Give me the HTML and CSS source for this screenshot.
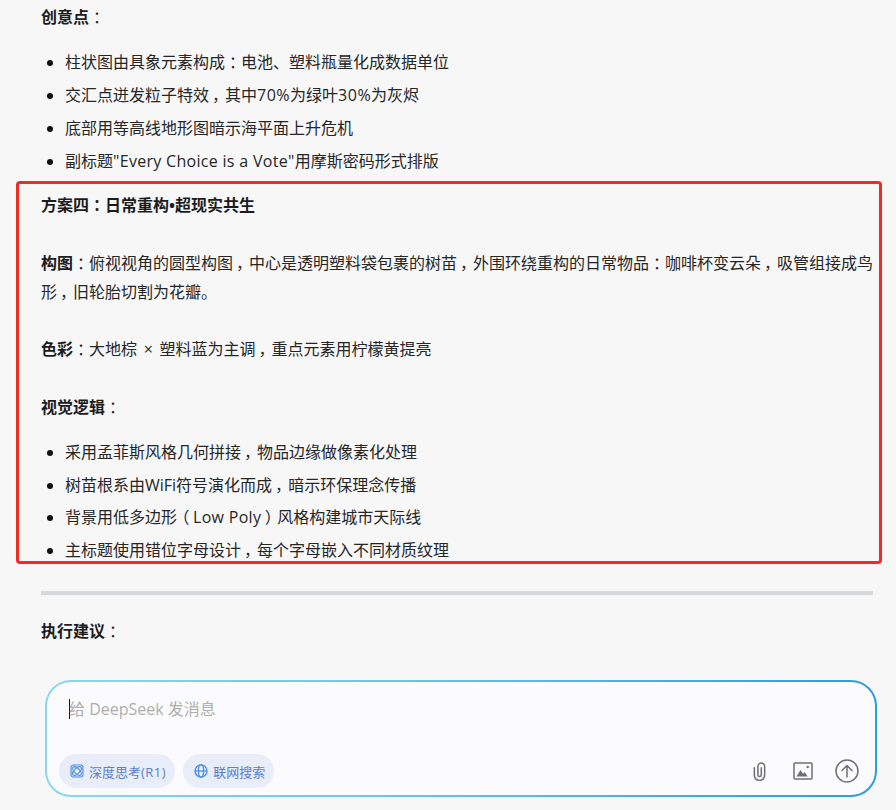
FILE: index.html
```html
<!DOCTYPE html>
<html lang="zh-CN">
<head>
<meta charset="utf-8">
<title>DeepSeek</title>
<link rel="stylesheet" href="styles.css">
</head>
<body>
<div class="page">
  <main class="chat">
    <p><strong>创意点</strong><span class="pun">：</span></p>
    <ul>
      <li>柱状图由具象元素构成<span class="pun">：</span>电池、塑料瓶量化成数据单位</li>
      <li>交汇点迸发粒子特效<span class="pun">，</span>其中<span class="lat-wide">70%</span>为绿叶<span class="lat-wide">30%</span>为灰烬</li>
      <li>底部用等高线地形图暗示海平面上升危机</li>
      <li>副标题<span class="lat">"Every Choice is a Vote"</span>用摩斯密码形式排版</li>
    </ul>
    <p><strong>方案四<span class="pun">：</span>日常重构•超现实共生</strong></p>
    <p><strong>构图</strong><span class="pun">：</span>俯视视角的圆型构图<span class="pun">，</span>中心是透明塑料袋包裹的树苗<span class="pun">，</span>外围环绕重构的日常物品<span class="pun">：</span>咖啡杯变云朵<span class="pun">，</span>吸管组接成鸟形<span class="pun">，</span>旧轮胎切割为花瓣。</p>
    <p><strong>色彩</strong><span class="pun">：</span>大地棕 <span class="times">×</span> 塑料蓝为主调<span class="pun">，</span>重点元素用柠檬黄提亮</p>
    <p><strong>视觉逻辑</strong><span class="pun">：</span></p>
    <ul>
      <li>采用孟菲斯风格几何拼接<span class="pun">，</span>物品边缘做像素化处理</li>
      <li>树苗根系由WiFi符号演化而成<span class="pun">，</span>暗示环保理念传播</li>
      <li>背景用低多边形<span class="pun">（</span><span class="lat">Low Poly</span><span class="pun">）</span>风格构建城市天际线</li>
      <li>主标题使用错位字母设计<span class="pun">，</span>每个字母嵌入不同材质纹理</li>
    </ul>
    <hr class="rule">
    <p><strong>执行建议</strong><span class="pun">：</span></p>
  </main>
  <div class="highlight"></div>
  <section class="composer">
    <div class="prompt"><span class="caret"></span><span>给 DeepSeek 发消息</span></div>
    <div class="toolbar">
      <button class="chip">
        <svg class="chip-icon" viewBox="0 0 16 16" fill="none" stroke="currentColor" stroke-width="1.3"><rect x="1.2" y="1.2" width="13.6" height="13.6" rx="2.5"/><ellipse cx="8" cy="8" rx="6.4" ry="3" transform="rotate(45 8 8)"/><ellipse cx="8" cy="8" rx="6.4" ry="3" transform="rotate(-45 8 8)"/></svg>
        <span>深度思考<span class="lat-wide">(R1)</span></span>
      </button>
      <button class="chip">
        <svg class="chip-icon" viewBox="0 0 16 16" fill="none" stroke="currentColor" stroke-width="1.5"><circle cx="8" cy="8" r="6.9"/><ellipse cx="8" cy="8" rx="3" ry="6.9"/><path d="M1.1 8h13.8"/></svg>
        <span>联网搜索</span>
      </button>
      <div class="actions">
        <svg class="clip" viewBox="0 0 16 20" fill="none" stroke="currentColor" stroke-width="1.6" stroke-linecap="round"><path d="M2.5 6v8a5.5 5.5 0 0 0 11 0V4.6a3.6 3.6 0 0 0-7.2 0v9a1.8 1.8 0 0 0 3.6 0V6"/></svg>
        <svg class="pic" viewBox="0 0 20 18" fill="none"><rect x="1" y="1" width="18" height="16" rx="1" stroke="currentColor" stroke-width="1.5"/><path d="M3.5 14.5l4-6.5 2.6 3.8 1.6-1.8 3 4.5z" fill="currentColor"/><circle cx="14.7" cy="5" r="1.2" fill="currentColor"/></svg>
        <svg class="send" viewBox="0 0 24 24" fill="none" stroke="currentColor" stroke-width="1.5" stroke-linecap="round" stroke-linejoin="round"><circle cx="12" cy="12" r="11"/><path d="M12 18V6.8M7 11.5l5-5 5 5"/></svg>
      </div>
    </div>
  </section>
</div>
</body>
</html>
```
FILE: styles.css
```css
* { box-sizing: border-box; }
html, body { margin: 0; height: 100%; }
body {
  background: #f7f7f8;
  color: #262626;
  font-family: "Open Sans", "Noto Sans CJK SC", sans-serif;
  font-size: 16px;
  overflow: hidden;
}
.page { position: relative; width: 896px; height: 810px; overflow: hidden; }
.chat { padding: 3.4px 18px 0 41px; }
p { margin: 0 0 28.8px; line-height: 28.8px; }
strong { font-weight: 700; color: #1c1c1c; }
ul { margin: 16px 0; padding: 0 0 0 24px; }
li { line-height: 28.8px; margin-bottom: 4px; }
li::marker { color: #111; }
.chat > p + ul { margin-top: -12.8px; }
.pun { display: inline-block; width: 1em; text-align: center; font-feature-settings: "palt"; font-weight: 400; }
strong .pun { font-weight: 700; }
.lat { letter-spacing: .3px; }
.lat-wide { letter-spacing: .5px; }
.times { padding: 0 2.5px; }
.rule { height: 4px; margin: 26px 5px 22px 0; border: 0; background: #d6d9db; }
.highlight {
  position: absolute; left: 16px; top: 181px; width: 866px; height: 383px;
  border: 3px solid #ef2b24; border-radius: 4px; pointer-events: none;
}
.composer {
  margin: 34.6px 19px 0 45px;
  height: 117px;
  padding: 15px 16px 7px 12px;
  border: 2px solid transparent;
  border-radius: 26px;
  background:
    linear-gradient(#fbfbfd, #fbfbfd) padding-box,
    linear-gradient(90deg, #8ad8ec 0%, #6cc5ea 40%, #2a9cdf 100%) border-box;
  display: flex; flex-direction: column; justify-content: space-between;
}
.prompt { display: flex; align-items: center; height: 24px; padding-left: 10px; color: #aeaeae; line-height: 24px; }
.caret { width: 1px; height: 20px; background: #111; margin-right: -1px; }
.toolbar { display: flex; align-items: center; gap: 8px; }
.chip {
  display: flex; align-items: center; gap: 5px; height: 34px; padding: 0 9px 0 11px;
  border: 0; border-radius: 17px; background: #e8edf9; color: #5b7fc9;
  font: 13px "Open Sans", "Noto Sans CJK SC", sans-serif;
}
.chip-icon { width: 14px; height: 14px; color: #4a90e2; }
.actions { margin-left: auto; display: flex; align-items: center; color: #707070; }
.clip { width: 15px; height: 19px; }
.pic { width: 20px; height: 18px; margin-left: 26px; }
.send { width: 24px; height: 24px; margin-left: 22px; }
```
